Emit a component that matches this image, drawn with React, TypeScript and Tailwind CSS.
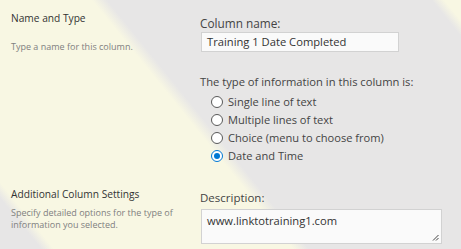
const TYPES = [
  { label: 'Single line of text', checked: false },
  { label: 'Multiple lines of text', checked: false },
  { label: 'Choice (menu to choose from)', checked: false },
  { label: 'Date and Time', checked: true },
]

function Radio({ checked }: { checked: boolean }) {
  return (
    <span
      className={`flex h-[12px] w-[12px] shrink-0 items-center justify-center rounded-full border bg-white ${
        checked ? 'border-[#0078d4]' : 'border-[#595959]'
      }`}
    >
      {checked && <span className="h-[6px] w-[6px] rounded-full bg-[#0078d4]" />}
    </span>
  )
}

export default function App() {
  return (
    <div className="h-[249px] w-full overflow-hidden bg-[linear-gradient(51deg,#e7e6e6_0px,#e7e6e6_32px,#f8f7e3_42px,#f8f7e3_228px,#e7e6e6_240px,#e7e6e6_492px,#f8f7e3_502px)] font-['Open_Sans',sans-serif] text-[#333]">
      {/* Name and Type */}
      <section className="flex">
        <div className="w-[200px] shrink-0 pl-[11px] pt-[10px]">
          <h3 className="text-[10.2px] leading-[16px] text-[#333]">Name and Type</h3>
          <p className="mt-[14px] text-[9px] leading-[14px] text-[#808080]">Type a name for this column.</p>
        </div>
        <div className="flex-1 pt-[15px]">
          <label className="block text-[11.8px] leading-[16px] text-[#444]">Column name:</label>
          <div className="mt-[1px] ml-[1px] flex h-[20px] w-[198px] items-center border border-[#d2d2d2] bg-[#fafafa] px-[5px] text-[11.2px] text-[#333]">
            Training 1 Date Completed
          </div>
          <p className="mt-[22px] text-[11.2px] leading-[16px] text-[#444]">The type of information in this column is:</p>
          <div className="mt-[3px] flex flex-col pl-[11px]">
            {TYPES.map((t) => (
              <div key={t.label} className="flex h-[18px] items-center gap-[5px] text-[11.1px] text-[#444]">
                <Radio checked={t.checked} />
                <span>{t.label}</span>
              </div>
            ))}
          </div>
        </div>
      </section>

      {/* Additional Column Settings */}
      <section className="mt-[21px] flex">
        <div className="w-[200px] shrink-0 pl-[11px]">
          <h3 className="text-[10.2px] leading-[16px] text-[#333]">Additional Column Settings</h3>
          <p className="mt-[5px] text-[9px] leading-[12px] text-[#808080]">
            Specify detailed options for the type of
            <br />
            information you selected.
          </p>
        </div>
        <div className="flex-1 pt-[4px]">
          <label className="block text-[11.5px] leading-[16px] text-[#444]">Description:</label>
          <div className="relative mt-[3px] ml-[1px] h-[35px] w-[241px] border border-[#d2d2d2] bg-[#fafafa] px-[5px] pt-[3px] text-[11.2px] text-[#333]">
            www.linktotraining1.com
            <svg className="absolute bottom-[2px] right-[2px]" width="7" height="7" viewBox="0 0 7 7">
              <path d="M1 6.5 L6.5 1 M4 6.5 L6.5 4" stroke="#444" strokeWidth="1" />
            </svg>
          </div>
        </div>
      </section>
    </div>
  )
}
